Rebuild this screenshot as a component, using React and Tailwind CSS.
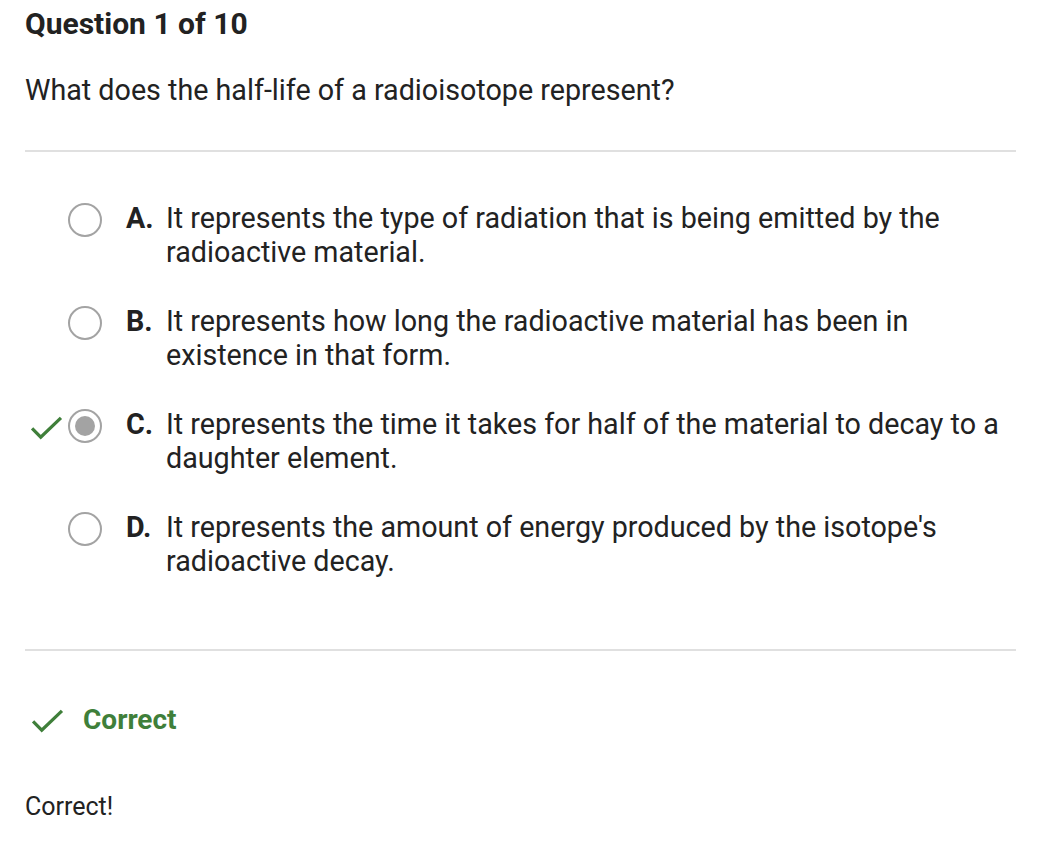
import React from 'react';

const options = [
  { letter: 'A.', text: 'It represents the type of radiation that is being emitted by the radioactive material.' },
  { letter: 'B.', text: 'It represents how long the radioactive material has been in existence in that form.' },
  { letter: 'C.', text: 'It represents the time it takes for half of the material to decay to a daughter element.', selected: true },
  { letter: 'D.', text: "It represents the amount of energy produced by the isotope's radioactive decay." },
];

const Check = ({ className }) => (
  <svg viewBox="0 0 34 26" className={className} fill="none" stroke="#3f7f3a" strokeWidth="3.4">
    <path d="M2 14 L11 23 L32 3" />
  </svg>
);

const Radio = ({ selected }) => (
  <div className="w-[34px] h-[34px] rounded-full border-2 border-[#a3a3a3] flex items-center justify-center shrink-0">
    {selected && <div className="w-[20px] h-[20px] rounded-full bg-[#a3a3a3]" />}
  </div>
);

export default function App() {
  return (
    <div className="bg-white min-h-screen pl-[25px] pr-[42px] text-[#222] font-['Roboto',sans-serif]">
      <h1 className="pt-[6px] text-[30px] leading-[36px] font-bold">Question 1 of 10</h1>
      <p className="mt-[31px] text-[28.7px] leading-[34px]">What does the half-life of a radioisotope represent?</p>
      <div className="mt-[43px] h-[2px] bg-[#e0e0e0]" />

      <div className="pt-[49px] flex flex-col gap-[35px]">
        {options.map((o) => (
          <div key={o.letter} className="flex items-start">
            <div className="w-[43px] h-[34px] flex items-center shrink-0">
              {o.selected && <Check className="w-[33px] h-[25px] ml-[5px] mt-[6px]" />}
            </div>
            <div className="pt-[2px]">
              <Radio selected={o.selected} />
            </div>
            <span className="ml-[24px] w-[40px] shrink-0 text-[28.7px] leading-[34px] font-bold">{o.letter}</span>
            <span className="text-[28.7px] leading-[34px]">{o.text}</span>
          </div>
        ))}
      </div>

      <div className="mt-[71px] h-[2px] bg-[#e0e0e0]" />

      <div className="mt-[52px] flex items-center">
        <Check className="w-[33px] h-[25px] ml-[6px]" />
        <span className="ml-[19px] text-[28px] leading-[34px] font-bold text-[#3f7f3a]">Correct</span>
      </div>

      <p className="mt-[55px] text-[25px] leading-[30px]">Correct!</p>
    </div>
  );
}
